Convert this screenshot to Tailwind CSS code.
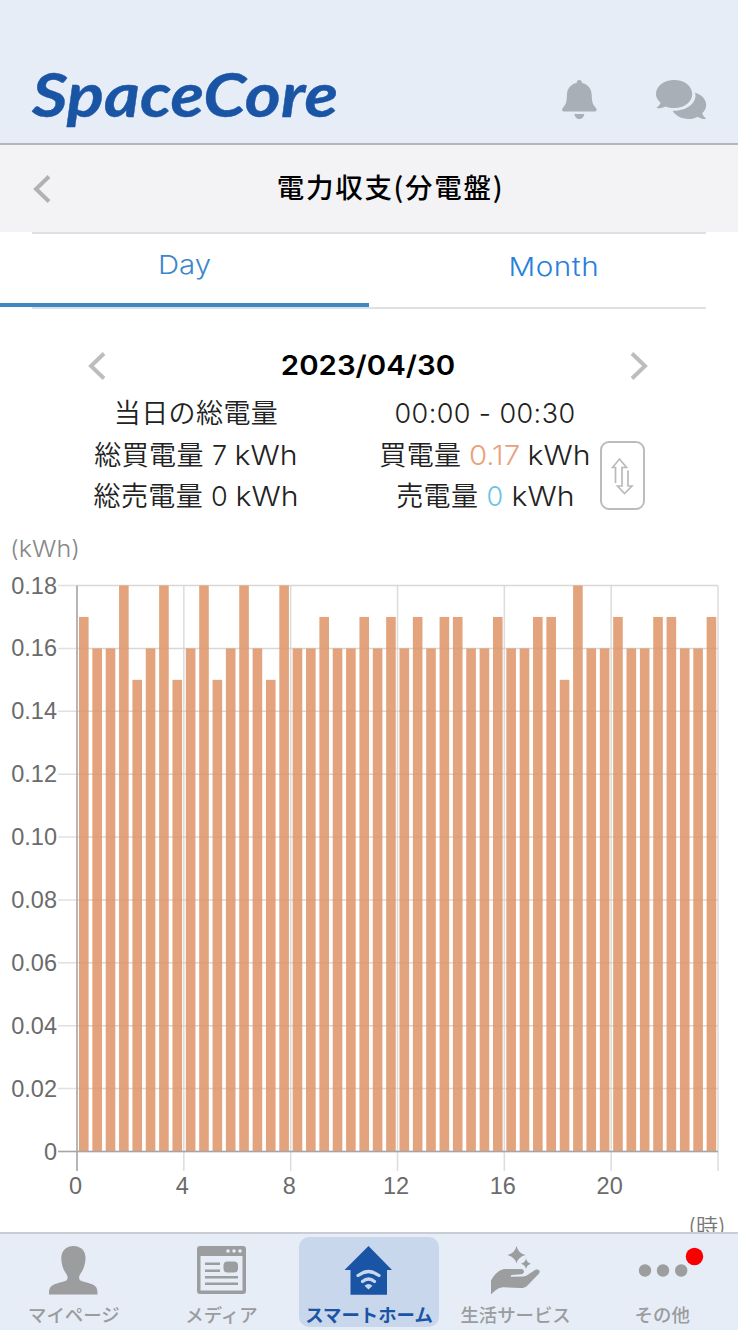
<!doctype html>
<html lang="ja">
  <head>
    <meta charset="UTF-8" />
    <meta name="viewport" content="width=device-width, initial-scale=1.0" />
    <title>SpaceCore</title>
    <script src="https://cdn.jsdelivr.net/npm/@tailwindcss/browser@4"></script>
  </head>
  <body class="bg-white font-['Inter','Noto_Sans_CJK_JP',sans-serif] text-[#222]">
    <div class="flex h-[1330px] w-[738px] flex-col overflow-hidden">
      <!-- ヘッダー -->
      <header class="flex h-[145px] shrink-0 items-start justify-between border-b-2 border-[#b4b7bd] bg-[#e6edf7] pr-[31px] pl-[30px]">
        <h1 class="mt-[48px]">
          <svg class="block overflow-visible" width="312" height="94" viewBox="0 0 312 94">
            <text x="2" y="68.5" textLength="306" lengthAdjust="spacingAndGlyphs" class="fill-[#1a55a5] font-['Lato'] text-[62px] font-bold italic" stroke="#1a55a5" stroke-width="0.4">SpaceCore</text>
          </svg>
        </h1>
        <div class="mt-20 flex">
          <button type="button" class="mr-[59px]">
            <svg class="block" width="35" height="40" viewBox="0 0 35 40" fill="#a9afb7">
              <path d="M17.3 0c1.6 0 2.6 1.1 2.7 3 6 1.300 9.500 5.500 9.700 12 .2 6.500.8 8.900 3.400 11.900 1.700 1.900 2 3 .9 4.100-.5.500-1.200.6-2 .6H2.700c-.8 0-1.500-.1-2-.6-1.100-1.100-.8-2.200.9-4.100C4.200 23.900 4.700 21.500 4.900 15c.2-6.500 3.700-10.700 9.700-12 .1-1.900 1.100-3 2.700-3z" />
              <path d="M12.300 34h10.100c-.5 3-2.500 5-5.050 5s-4.550-2-5.050-5z" />
            </svg>
          </button>
          <button type="button">
            <svg class="block" width="51" height="40" viewBox="0 0 51 40" fill="#a9afb7">
              <path d="M18.200 0C28.300 0 36.200 6 36.200 14S28.300 28 18.200 28c-3.200 0-6-.5-8.500-1.600-2.700 1.400-6.200 2-9.400 1.700 2-1.500 3.700-3.300 4.300-5.300C1.700 20.300 0 17.400 0 14 0 6 8.100 0 18.200 0z" />
              <path d="M38.800 12.500C45.500 14.500 50.200 19.300 50.200 25c0 3.400-1.600 6-3.900 8.100.5 2.400 2 4.200 3.900 5.900-3.200.1-6.200-.7-8.700-2.300-2.500 1.400-5.400 2.300-8.800 2.300-7.300 0-13.200-3.300-16.200-8.200C29.500 31.300 39.500 24 39.500 15.500c0-1-.2-2-.7-3z" />
            </svg>
          </button>
        </div>
      </header>

      <!-- タイトル -->
      <div class="flex h-[87px] shrink-0 items-center bg-[#f3f3f6] px-8">
        <svg width="20" height="30" viewBox="0 0 20 30" fill="none" stroke="#b1b1b3" stroke-width="4">
          <path d="M17 2.500 4 15 17 27.500" />
        </svg>
        <h2 class="flex-1 pb-[5px] pl-[23px] text-center font-['Noto_Sans_CJK_JP',sans-serif] text-[27.500px] leading-10 font-medium tracking-[1.700px] text-black">電力収支(分電盤)</h2>
      </div>

      <!-- タブ -->
      <div class="mx-8 h-0.5 shrink-0 bg-[#dfe0e3]"></div>
      <nav class="flex h-[73px] shrink-0 text-[26px]">
        <a href="#" class="flex h-[73px] w-[369px] items-start justify-center border-b-4 border-[#3f87c1] pt-[13px] leading-9 font-light text-[#3c87cb]"><span class="inline-block scale-x-[1.13]">Day</span></a>
        <a href="#" class="flex h-[73px] w-[369px] items-start justify-center pt-[15px] leading-9 font-[350] text-[#2580dc]"><span class="inline-block scale-x-[1.14] tracking-[0.500px]">Month</span></a>
      </nav>
      <div class="mx-8 h-0.5 shrink-0 bg-[#dfe0e2]"></div>

      <!-- 日付 -->
      <div class="mr-[89px] ml-[87px] mt-[37px] flex h-10 shrink-0 items-center justify-between">
        <svg width="20" height="30" viewBox="0 0 20 30" fill="none" stroke="#bdbdbd" stroke-width="4">
          <path d="M17 2.500 4 15 17 27.500" />
        </svg>
        <span class="inline-block scale-x-[1.09] text-[27px] font-semibold text-black">2023/04/30</span>
        <svg width="20" height="30" viewBox="0 0 20 30" fill="none" stroke="#bdbdbd" stroke-width="4">
          <path d="M3 2.500 16 15 3 27.500" />
        </svg>
      </div>

      <!-- 電力量 -->
      <section class="flex h-[130px] shrink-0 pt-[7px] text-center text-[27px] leading-[41.500px] font-[350] tracking-[0.400px] whitespace-nowrap">
        <div class="ml-[76px] w-[240px]">
          <p>当日の総電量</p>
          <p>総買電量 7 <span class="mx-[3px] inline-block scale-x-[1.12] tracking-normal">kWh</span></p>
          <p>総売電量 0 <span class="mx-[3px] inline-block scale-x-[1.12] tracking-normal">kWh</span></p>
        </div>
        <div class="ml-[49px] w-[240px]">
          <p>00:00 - 00:30</p>
          <p>買電量 <span class="mx-[2px] inline-block scale-x-[1.09] font-light tracking-normal text-[#e8a27b]">0.17</span> <span class="mx-[3px] inline-block scale-x-[1.12] tracking-normal">kWh</span></p>
          <p>売電量 <span class="font-light text-[#6cc4e0]">0</span> <span class="mx-[3px] inline-block scale-x-[1.12] tracking-normal">kWh</span></p>
        </div>
        <button type="button" class="mt-[48px] -ml-[5px] flex h-[69px] w-[45px] items-center justify-center rounded-[9px] border-2 border-[#bcbcbc] bg-white">
          <svg width="23" height="38" viewBox="0 0 23 38" fill="none" stroke="#bababa" stroke-width="1.700">
            <path d="M4.500 26V10.500H1.500L8.500 2l7 8.500H11V29H6.500l7 7.500 7.500-7.500h-4V13.500" />
          </svg>
        </button>
      </section>

      <!-- グラフ -->
      <svg id="chart" class="block shrink-0" width="738" height="716" viewBox="0 516 738 716">
        <text x="10" y="557" textLength="70" lengthAdjust="spacingAndGlyphs" class="fill-[#888] text-[23px] font-light">(kWh)</text>
        <g id="grid"></g>
        <g id="bars" fill="#e3a37c"></g>
        <g id="axis"></g>
        <text x="707" y="1234" text-anchor="middle" class="fill-[#777] text-[22px] font-[350]">(時)</text>
      </svg>

      <!-- 下部メニュー -->
      <footer class="grid h-[98px] shrink-0 grid-cols-5 border-t-2 border-[#c9cdd3] bg-[#e6edf7] pt-[3px] text-center font-['Noto_Sans_CJK_JP',sans-serif] text-[18.400px] leading-6 font-medium text-[#9a9c9e]">
        <a href="#" class="flex flex-col items-center pt-[9px] whitespace-nowrap">
          <svg class="shrink-0" width="49" height="49" viewBox="0 0 49 49" fill="#9b9d9f">
            <path d="M24.500 0C32.500 0 37 5.500 36.500 13c-.4 6.500-2.500 11.500-5.500 15.500-1.300 2-1.300 4.500.5 6 2.200 1.600 9.500 2.500 13.200 4.500C48 41 48.500 43.500 48.500 48.500H0C0 43.500.5 41 4 39c3.700-2 11-2.900 13.200-4.500 1.800-1.500 1.800-4 .5-6C14.700 24.500 12.600 19.500 12.300 13 12 5.500 16.500 0 24.500 0z" />
          </svg>
          <span class="mt-[7px]">マイページ</span>
        </a>
        <a href="#" class="flex flex-col items-center pt-[9px] whitespace-nowrap">
          <svg class="shrink-0" width="49" height="49" viewBox="0 0 49 49" fill="#9b9d9f">
            <path fill-rule="evenodd" d="M3 0h43a3 3 0 0 1 3 3v42a3 3 0 0 1-3 3H3a3 3 0 0 1-3-3V3a3 3 0 0 1 3-3zM3.500 10v34.500h42V10z" />
            <g fill="#e6edf7"><circle cx="31" cy="5" r="1.800" /><circle cx="37" cy="5" r="1.800" /><circle cx="43" cy="5" r="1.800" /></g>
            <path d="M8 16.500h15v2.500H8zM8 23.500h15v2.500H8zM8 30h33v2.500H8zM8 36.500h33v2.500H8z" />
            <rect x="26.500" y="15.500" width="14.500" height="11" rx="4" />
          </svg>
          <span class="mt-[7px]">メディア</span>
        </a>
        <a href="#" class="mx-1 flex h-[90px] flex-col items-center rounded-[10px] bg-[#c8d7ec] pt-[9px] font-bold whitespace-nowrap text-[#1a55a5]">
          <svg class="shrink-0" width="49" height="49" viewBox="0 0 49 49" fill="#1a55a5">
            <path d="M24.500 0 48 24h-5v24.800H6.500V24H.5z" />
            <g fill="none" stroke="#c8d7ec" stroke-width="3.200" stroke-linecap="round">
              <path d="M14 29.500q10.500-8 21 0M18.500 35.500q6-5 12 0" />
            </g>
            <path fill="#c8d7ec" d="M24.500 43.500 20.500 39.800q4-3.800 8 0z" />
          </svg>
          <span class="mt-[7px]">スマートホーム</span>
        </a>
        <a href="#" class="flex flex-col items-center pt-[9px] pr-0.5 whitespace-nowrap">
          <svg class="shrink-0" width="49" height="49" viewBox="0 0 49 49" fill="#9b9d9f">
            <path d="M25.500 0Q27 7 34.500 9 27 11 25.500 17.500 24 11 16.500 9 24 7 25.500 0zM35 12.500q1 4.200 5 5.200-4 1-5 5.300-1-4.300-5-5.300 4-1 5-5.200z" />
            <path d="M0 34.500C4 27 9 23.500 14 23h16c4 .3 4 4.700 0 5.300L20.500 29c-1 .3-1 1.500 0 1.700l12-.2c3-.3 5-2.500 12-6.700 3-1.300 5.500 1.200 3.300 4L36 40c-2 1.500-3.500 2-6 2L12 41.300C7.500 41.500 4 44.500 0 48.500z" />
          </svg>
          <span class="mt-[7px]">生活サービス</span>
        </a>
        <a href="#" class="flex flex-col items-center pt-[9px] pr-1 whitespace-nowrap">
          <svg class="shrink-0 overflow-visible" width="49" height="49" viewBox="0 0 49 49" fill="#9b9d9f">
            <circle cx="7" cy="24.500" r="6.200" /><circle cx="25" cy="24.500" r="6.200" /><circle cx="43.200" cy="24.500" r="6.200" />
            <circle cx="56.500" cy="10.500" r="8.700" fill="#f80000" />
          </svg>
          <span class="mt-[7px]">その他</span>
        </a>
      </footer>
    </div>

    <script>
      // 30分ごとの買電量 (kWh x 100)
      const values = [
        17, 16, 16, 18, 15, 16, 18, 15, 16, 18, 15, 16, 18, 16, 15, 18,
        16, 16, 17, 16, 16, 17, 16, 17, 16, 17, 16, 17, 17, 16, 16, 17,
        16, 16, 17, 17, 15, 18, 16, 16, 17, 16, 16, 17, 17, 16, 16, 17,
      ];
      const left = 77;
      const right = 718;
      const top0 = 585.5;
      const bottom = 1151.5;
      const step = (right - left) / values.length;

      const line = (x1, y1, x2, y2, color) => `<path d="M${x1} ${y1}L${x2} ${y2}" stroke="${color}" stroke-width="1.5" />`;
      const label = (x, y, anchor, text) => `<text x="${x}" y="${y}" text-anchor="${anchor}" fill="#6b6b6b" font-family="Liberation Sans, sans-serif" font-size="23.5">${text}</text>`;

      let grid = "";
      let over = "";
      for (let i = 0; i <= 9; i++) {
        const y = bottom - ((bottom - top0) / 9) * i;
        grid += line(58, y, right, y, "#e0e0e0");
        over += line(left, y, right, y, "rgba(120,100,90,0.06)");
        over += label(57, y + 8, "end", i === 0 ? "0" : (i * 0.02).toFixed(2));
      }
      for (let h = 0; h <= 24; h += 4) {
        const x = left + step * h * 2;
        grid += line(x, top0, x, 1171, "#dcdcdc");
        if (h < 24) over += label(x - 1.5, 1194, "middle", h);
      }
      over += line(left, top0, left, 1171, "#a6a6a6") + line(58, bottom, right, bottom, "#a6a6a6");

      document.getElementById("grid").innerHTML = grid;
      document.getElementById("axis").innerHTML = over;
      document.getElementById("bars").innerHTML = values
        .map((v, i) => {
          const h = ((bottom - top0) / 18) * v;
          return `<rect x="${left + step * i + 2}" y="${bottom - h}" width="9.6" height="${h}" />`;
        })
        .join("");
    </script>
  </body>
</html>
